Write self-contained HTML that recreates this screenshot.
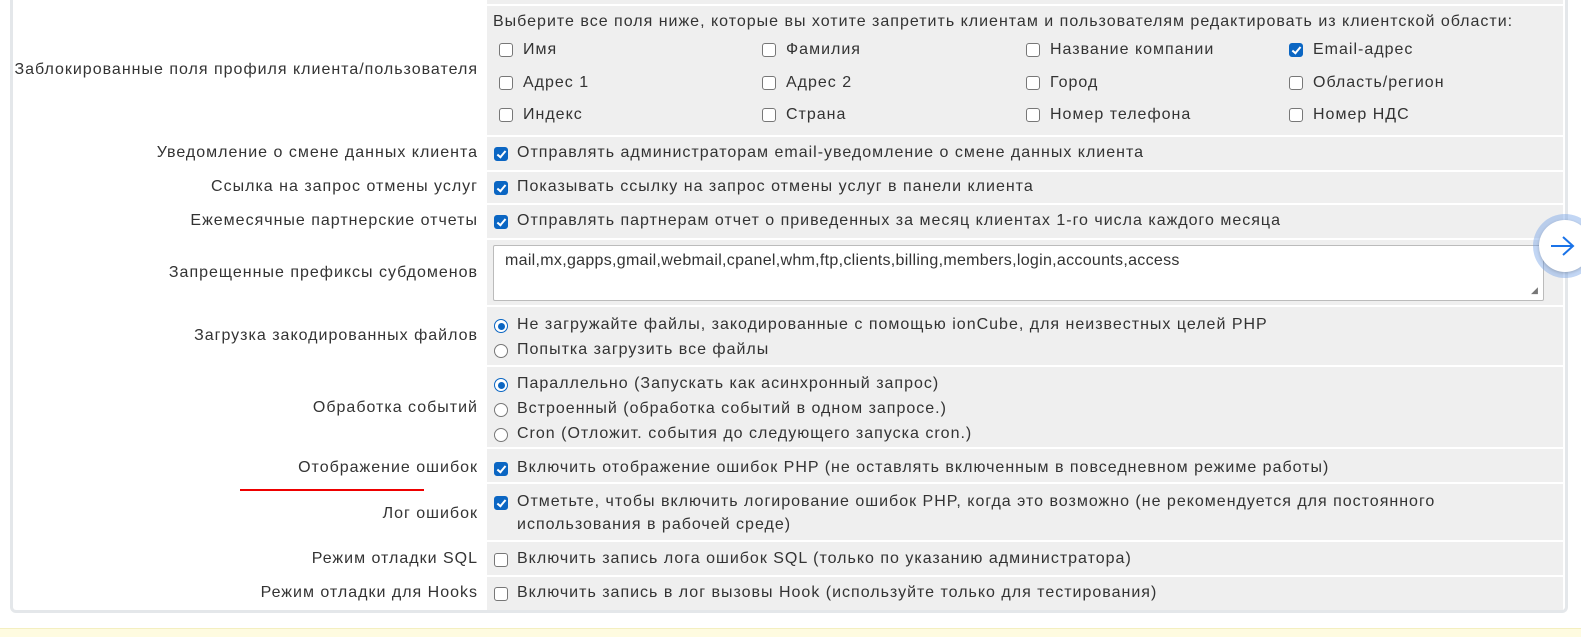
<!DOCTYPE html>
<html style="overflow:hidden"><head><meta charset="utf-8"><style>
*{box-sizing:border-box}
html,body{margin:0;padding:0}
body{width:1581px;height:637px;background:#fff;overflow:hidden;font-family:"Liberation Sans",sans-serif;font-size:16px;color:#333;letter-spacing:1px}
#w{position:relative;width:1581px;height:637px;overflow:hidden}
.box{position:absolute;left:10px;top:-10px;width:1558px;height:623px;border:3px solid #e4e7ea;border-top:none;border-radius:0 0 6px 6px}
.c{position:absolute;left:487px;width:1076px;background:#efefef}
.l{position:absolute;right:1103px;text-align:right;white-space:nowrap}
.t{position:absolute;white-space:nowrap}
.cb{position:absolute;width:14px;height:14px;border:1px solid #777;border-radius:3px;background:#fff}
.cb.on{background:#0b66c3;border-color:#0b66c3}
.cb.on::after{content:"";position:absolute;left:4px;top:1px;width:3px;height:7px;border:solid #fff;border-width:0 2px 2px 0;transform:rotate(40deg)}
.rb{position:absolute;width:14px;height:14px;border:1px solid #777;border-radius:50%;background:#fff}
.rb.on{border-color:#0b66c3}
.rb.on::after{content:"";position:absolute;left:2.5px;top:2.5px;width:7px;height:7px;border-radius:50%;background:#0b66c3}
</style></head><body><div id="w">
<div class="box"></div>
<div class="c" style="top:0;height:4px"></div>
<div class="c" style="top:6px;height:129px"></div>
<div class="c" style="top:137px;height:33px"></div>
<div class="c" style="top:172px;height:31px"></div>
<div class="c" style="top:205px;height:33px"></div>
<div class="c" style="top:240px;height:65px"></div>
<div class="c" style="top:307px;height:58px"></div>
<div class="c" style="top:367px;height:80px"></div>
<div class="c" style="top:449px;height:33px"></div>
<div class="c" style="top:484px;height:56px"></div>
<div class="c" style="top:542px;height:33px"></div>
<div class="c" style="top:577px;height:33px"></div>

<div class="l" style="top:61px">Заблокированные поля профиля клиента/пользователя</div>
<div class="l" style="top:144px">Уведомление о смене данных клиента</div>
<div class="l" style="top:178px">Ссылка на запрос отмены услуг</div>
<div class="l" style="top:212px">Ежемесячные партнерские отчеты</div>
<div class="l" style="top:264px">Запрещенные префиксы субдоменов</div>
<div class="l" style="top:327px">Загрузка закодированных файлов</div>
<div class="l" style="top:399px">Обработка событий</div>
<div class="l" style="top:459px">Отображение ошибок</div>
<div style="position:absolute;left:240px;top:489px;width:184px;height:2px;background:#e00"></div>
<div class="l" style="top:505px">Лог ошибок</div>
<div class="l" style="top:550px">Режим отладки SQL</div>
<div class="l" style="top:584px">Режим отладки для Hooks</div>

<div class="t" style="left:493px;top:13px">Выберите все поля ниже, которые вы хотите запретить клиентам и пользователям редактировать из клиентской области:</div>
<div class="cb" style="left:499px;top:43px"></div><div class="t" style="left:523px;top:41px">Имя</div>
<div class="cb" style="left:762px;top:43px"></div><div class="t" style="left:786px;top:41px">Фамилия</div>
<div class="cb" style="left:1026px;top:43px"></div><div class="t" style="left:1050px;top:41px">Название компании</div>
<div class="cb on" style="left:1289px;top:43px"></div><div class="t" style="left:1313px;top:41px">Email-адрес</div>
<div class="cb" style="left:499px;top:76px"></div><div class="t" style="left:523px;top:74px">Адрес 1</div>
<div class="cb" style="left:762px;top:76px"></div><div class="t" style="left:786px;top:74px">Адрес 2</div>
<div class="cb" style="left:1026px;top:76px"></div><div class="t" style="left:1050px;top:74px">Город</div>
<div class="cb" style="left:1289px;top:76px"></div><div class="t" style="left:1313px;top:74px">Область/регион</div>
<div class="cb" style="left:499px;top:108px"></div><div class="t" style="left:523px;top:106px">Индекс</div>
<div class="cb" style="left:762px;top:108px"></div><div class="t" style="left:786px;top:106px">Страна</div>
<div class="cb" style="left:1026px;top:108px"></div><div class="t" style="left:1050px;top:106px">Номер телефона</div>
<div class="cb" style="left:1289px;top:108px"></div><div class="t" style="left:1313px;top:106px">Номер НДС</div>

<div class="cb on" style="left:494px;top:147px"></div><div class="t" style="left:517px;top:144px">Отправлять администраторам email-уведомление о смене данных клиента</div>
<div class="cb on" style="left:494px;top:181px"></div><div class="t" style="left:517px;top:178px">Показывать ссылку на запрос отмены услуг в панели клиента</div>
<div class="cb on" style="left:494px;top:215px"></div><div class="t" style="left:517px;top:212px">Отправлять партнерам отчет о приведенных за месяц клиентах 1-го числа каждого месяца</div>

<div style="position:absolute;left:493px;top:245px;width:1051px;height:56px;background:#fff;border:1px solid #bbb;border-radius:2px"></div>
<div class="t" style="left:505px;top:252px;letter-spacing:0.3px">mail,mx,gapps,gmail,webmail,cpanel,whm,ftp,clients,billing,members,login,accounts,access</div>
<div class="t" style="left:1531px;top:285px;font-size:9px;color:#777">◢</div>

<div class="rb on" style="left:494px;top:319px"></div><div class="t" style="left:517px;top:316px">Не загружайте файлы, закодированные с помощью ionCube, для неизвестных целей PHP</div>
<div class="rb" style="left:494px;top:344px"></div><div class="t" style="left:517px;top:341px">Попытка загрузить все файлы</div>
<div class="rb on" style="left:494px;top:378px"></div><div class="t" style="left:517px;top:375px">Параллельно (Запускать как асинхронный запрос)</div>
<div class="rb" style="left:494px;top:403px"></div><div class="t" style="left:517px;top:400px">Встроенный (обработка событий в одном запросе.)</div>
<div class="rb" style="left:494px;top:428px"></div><div class="t" style="left:517px;top:425px">Cron (Отложит. события до следующего запуска cron.)</div>

<div class="cb on" style="left:494px;top:462px"></div><div class="t" style="left:517px;top:459px">Включить отображение ошибок PHP (не оставлять включенным в повседневном режиме работы)</div>
<div class="cb on" style="left:494px;top:496px"></div><div class="t" style="left:517px;top:493px">Отметьте, чтобы включить логирование ошибок PHP, когда это возможно (не рекомендуется для постоянного</div>
<div class="t" style="left:517px;top:516px">использования в рабочей среде)</div>
<div class="cb" style="left:494px;top:553px"></div><div class="t" style="left:517px;top:550px">Включить запись лога ошибок SQL (только по указанию администратора)</div>
<div class="cb" style="left:494px;top:587px"></div><div class="t" style="left:517px;top:584px">Включить запись в лог вызовы Hook (используйте только для тестирования)</div>

<div style="position:absolute;left:0;top:628px;width:1581px;height:9px;background:#fefbe0;border-top:1px solid #f4efc0"></div>

<div style="position:absolute;left:1533px;top:214px;width:64px;height:64px;border-radius:50%;background:rgba(120,165,230,0.45)"></div>
<div style="position:absolute;left:1539px;top:220px;width:52px;height:52px;border-radius:50%;background:#fff;box-shadow:0 1px 3px rgba(0,0,0,.2)"></div>
<svg style="position:absolute;left:1549px;top:235px" width="30" height="22" viewBox="0 0 30 22"><path d="M2 11H24M14 2L24 11L14 20" stroke="#1a73e8" stroke-width="2" fill="none"/></svg>
</div></body></html>
